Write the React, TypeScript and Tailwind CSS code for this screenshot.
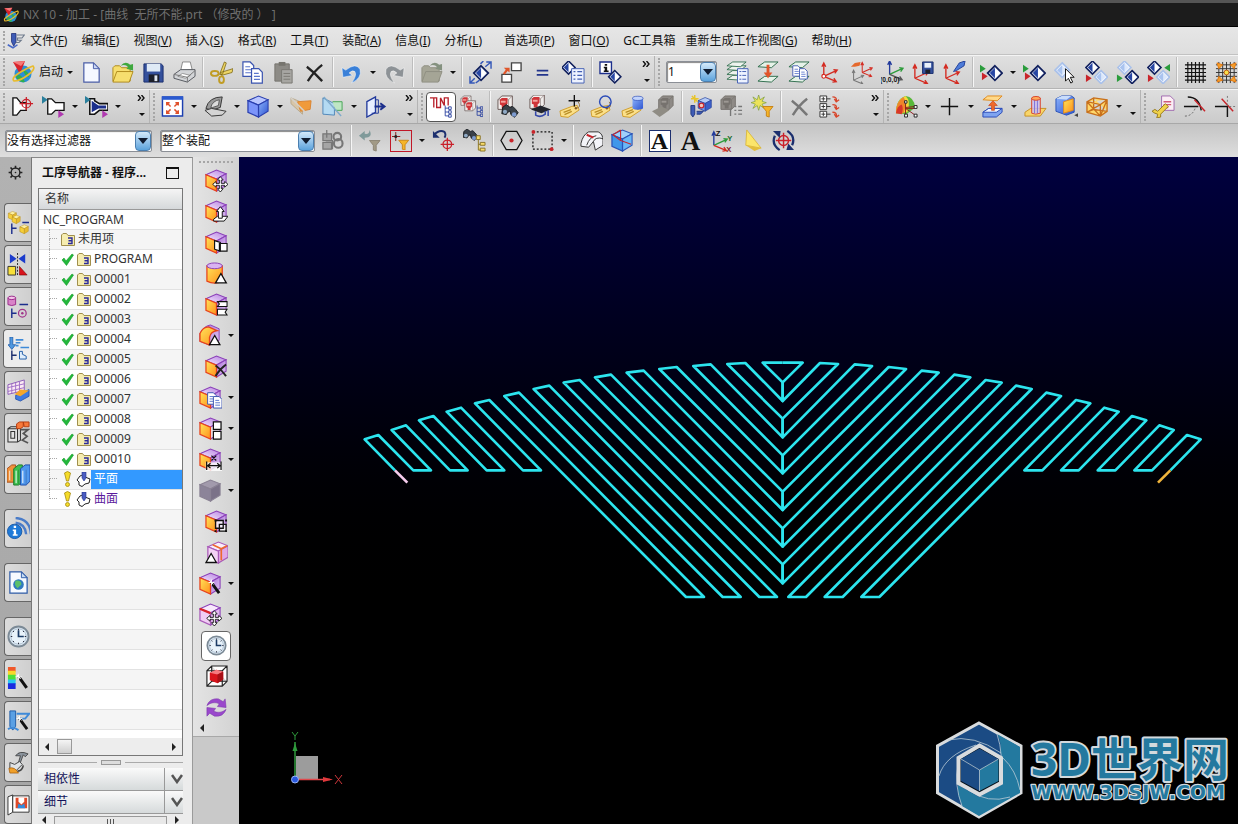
import { Fragment } from "react";
import type { ReactNode } from "react";

/* ---------- drawing primitives ---------- */

type Pos = { x?: number; y?: number; s?: number; children?: ReactNode };

const G = ({ x = 0, y = 0, s = 1, children }: Pos) => (
  <g transform={`translate(${x} ${y}) scale(${s})`}>{children}</g>
);

/* shared gradients, referenced by id from every icon */
const Paints = () => (
  <svg className="absolute size-0" aria-hidden="true">
    <defs>
      <linearGradient id="gold" x1="0" y1="0" x2="1" y2="1">
        <stop offset="0" stopColor="#ffe45a" />
        <stop offset="1" stopColor="#ff8f1a" />
      </linearGradient>
      <linearGradient id="lilac" x1="0" y1="1" x2="1" y2="0">
        <stop offset="0" stopColor="#f7ecff" />
        <stop offset="1" stopColor="#b57fe0" />
      </linearGradient>
      <linearGradient id="plum" x1="0" y1="0" x2="1" y2="1">
        <stop offset="0" stopColor="#a86cd8" />
        <stop offset="1" stopColor="#e3cdf3" />
      </linearGradient>
      <linearGradient id="sky" x1="0" y1="0" x2="1" y2="1">
        <stop offset="0" stopColor="#8db4fb" />
        <stop offset="1" stopColor="#2c52d0" />
      </linearGradient>
    </defs>
  </svg>
);

const Cube = ({
  x,
  y,
  s,
  top = "url(#lilac)",
  left = "url(#gold)",
  right = "url(#plum)",
  line = "#8a3fb8",
  edge = "#e8431c",
}: Pos & { top?: string; left?: string; right?: string; line?: string; edge?: string }) => (
  <G x={x} y={y} s={s}>
    <path d="M1 6L12 1L22 5L12 10.500Z" fill={top} stroke={line} strokeWidth="1.1" />
    <path d="M12 10.500L22 5V17L12 23Z" fill={right} stroke={line} strokeWidth="1.1" />
    <path d="M1 6L12 10.500V23L1 18Z" fill={left} stroke={edge} strokeWidth="1.3" />
  </G>
);

const Gem = ({ x, y, s = 1, pale }: Pos & { pale?: boolean }) => (
  <G x={x} y={y} s={s * 1.08}>
    <path d="M7 0L14 7L7 14L0 7Z" fill="#f4f8ff" stroke={pale ? "#a9c1ea" : "#101f5c"} strokeWidth="1.700" />
    <path d="M7 2.500L11.500 7L7 11.500L2.500 7Z" fill={pale ? "#dbe7fb" : "#fff"} />
    <path d="M7 2V12L2 7Z" fill={pale ? "#a9c3ef" : "#2746a4"} />
  </G>
);

const Tri = ({ x, y, s, c, left }: Pos & { c: string; left?: boolean }) => (
  <G x={x} y={y} s={s}>
    <path d={left ? "M6 0V8L0 4Z" : "M0 0V8L6 4Z"} fill={c} />
  </G>
);

const Axes = ({ x, y, s, c = "#d42a20", up = c, rt = c }: Pos & { c?: string; up?: string; rt?: string }) => (
  <G x={x} y={y} s={s}>
    <g fill="none" strokeWidth="1.4">
      <path d="M5 16V3M3 6L5 2L7 6" stroke={up} />
      <path d="M5 16L18 10M15 9L19 9.5L16.500 13" stroke={rt} />
      <path d="M5 16L17 21M14 22L18 21.500L15.500 18" stroke={c} />
    </g>
  </G>
);

const Bino = ({ x, y, s }: Pos) => (
  <G x={x} y={y} s={s}>
    <path d="M1 3L5 0L9 3L12 2L15 5L18 9L14 14L10 11L9 7L6 9L5 11L0 10Z" fill="#3a4148" stroke="#14181c" />
    <circle cx="3.500" cy="8" r="2.300" fill="#8fa9c4" />
    <circle cx="13.500" cy="11" r="2.500" fill="#7d9bd0" />
  </G>
);

const Part = ({ x, y, s, gray }: Pos & { gray?: boolean }) => (
  <G x={x} y={y} s={s}>
    <path d="M0 4L4 0H15V10L11 14H0Z" fill={gray ? "#8e8a86" : "#f1eeec"} stroke={gray ? "#77736f" : "#6b5a58"} />
    <path d="M0 4H11V14M11 4L15 0" fill="none" stroke={gray ? "#77736f" : "#8a7a78"} strokeWidth=".7" />
    <path d="M2 4L4 2H10V8L8 10V13H4V10L2 9Z" fill={gray ? "#76726e" : "#cf3438"} />
    <path d="M3 5H8V7H3Z" fill={gray ? "#9d9894" : "#f4a5a0"} />
  </G>
);

const Tree = ({ x, y, s, c = "#223a9c" }: Pos & { c?: string }) => (
  <G x={x} y={y} s={s}>
    <path d="M1 0V12H5M1 3H5M1 7.500H5M5 1.500H8V4.500H5ZM5 6H8V9H5ZM5 10.500H8V13.500H5Z" fill="none" stroke={c} />
  </G>
);

const Tag = ({ x, y, s }: Pos) => (
  <G x={x} y={y} s={s}>
    <path d="M0 7L13 2L19 1L21 6L9 14L1 13Z" fill="#fbe08a" stroke="#cf9a24" />
    <path d="M4 8.500L12 5.500M5 11L13 7.500" stroke="#b98d26" strokeWidth="1.300" />
    <circle cx="17.500" cy="4" r="1.300" fill="#8a5a1a" />
    <path d="M18 4Q24 3 20 -3" fill="none" stroke="#8a6a3a" strokeWidth=".9" />
  </G>
);

const Funnel = ({ x, y, s, c = "#f5b52a", e = "#c47c0c" }: Pos & { c?: string; e?: string }) => (
  <G x={x} y={y} s={s}>
    <path d="M0 0H11L7 5V11L4 10V5Z" fill={c} stroke={e} strokeWidth=".9" />
  </G>
);

const Target = ({ x, y, s }: Pos) => (
  <G x={x} y={y} s={s}>
    <g fill="none" stroke="#c9202a" strokeWidth="1.300">
      <circle cx="7" cy="7" r="4.500" />
      <path d="M7 0V14M0 7H14" />
    </g>
  </G>
);

const Page = ({ x, y, s }: Pos) => (
  <G x={x} y={y} s={s}>
    <path d="M0 0H6L9 3V12H0Z" fill="#fff" stroke="#3b54b0" />
    <path d="M2 4H6M2 6.500H7M2 9H7" stroke="#5b76cc" />
  </G>
);

const Layers = () => (
  <>
    {[15, 10, 5, 1].map((v) => (
      <path key={v} d={`M1 ${v + 4}L7 ${v}H21L15 ${v + 5}Z`} fill="#eef3ee" stroke="#2f6e4d" strokeWidth=".9" />
    ))}
  </>
);

const Wedge = ({ x, y, s }: Pos) => (
  <G x={x} y={y} s={s}>
    <path d="M4 0L8 7H0Z" fill="#fff" stroke="#111" strokeWidth="1" />
  </G>
);

const Wand = ({ x, y, s }: Pos) => (
  <G x={x} y={y} s={s}>
    <path d="M3 3L11 14" stroke="#111" strokeWidth="3" />
    <path d="M3 0V6M0 3H6M1 1L5 5" stroke="#fff" strokeWidth="1" />
  </G>
);

const Move = ({ x, y, s }: Pos) => (
  <G x={x} y={y} s={s}>
    <path
      d="M8 0L11 3.500H9V7H12.500V5L16 8L12.500 11V9H9V12.500H11L8 16L5 12.500H7V9H3.500V11L0 8L3.500 5V7H7V3.500H5Z"
      fill="#fff"
      stroke="#111"
      strokeWidth=".9"
    />
  </G>
);

const Clock = () => (
  <>
    <circle cx="12" cy="12" r="10.500" fill="#dbe8f4" stroke="#7c8a96" strokeWidth="2" />
    <circle cx="12" cy="12" r="8" fill="#e9f3fb" stroke="#8ca2b6" strokeWidth=".6" />
    <path d="M12 5.500V12H17.500" fill="none" stroke="#1c3c66" strokeWidth="1.800" />
    <path d="M12 4V5.500M12 18.500V20M4 12H5.500M18.500 12H20M6.300 6.300L7.300 7.300M17.700 6.300L16.700 7.300M6.300 17.700L7.300 16.700M17.700 17.700L16.700 16.700" stroke="#223" />
  </>
);

const Logo = () => (
  <>
    <circle cx="12" cy="14" r="8.500" fill="#2b8fd6" />
    <path d="M5 17Q9 11 14 22Q8 23 5 17ZM12 10Q18 11 18 17Q14 17 12 10Z" fill="#2fae4e" />
    <path d="M2 2L14 1L9 14Z" fill="#d8242c" />
    <path d="M2 2L14 1L10 6Z" fill="#f47a7a" />
    <path d="M3 21Q0 18 8 13T22 6Q25 9 17 15T3 21Z" fill="none" stroke="#e8bc2e" strokeWidth="1.700" />
  </>
);

const Folder = ({ c = "#f6de6e", e = "#b08a1c", arrow = "#3fa83f" }) => (
  <>
    <path d="M2 21V7L4 5H9L11 7H20V21Z" fill={c} stroke={e} />
    <path d="M2 22L6 11H23L19 22Z" fill={c} stroke={e} />
    <path d="M10 5Q15 -1 20 4L23 3V10L16 8L18 6.500Q15 3 10 5Z" fill={arrow} />
  </>
);

const Undo = ({ c = "#3a80d8", flip = false }) => (
  <g transform={flip ? "translate(24 0) scale(-1 1)" : undefined}>
    <path d="M2 7L3 17L13 15L9.500 12.500Q13 9 15.500 11Q18 15 12 23Q23 18 21 9Q17 1 6 9.500Z" fill={c} stroke="#fff" strokeWidth=".5" />
  </g>
);

const Letter = ({ x, y, size, c = "#111", children }: { x: number; y: number; size: number; c?: string; children: string }) => (
  <text x={x} y={y} fontSize={size} fill={c} fontWeight="bold" className="font-['Liberation_Sans',sans-serif]">
    {children}
  </text>
);

const ToolBit = () => (
  <>
    <path d="M6 2H12V13L9 19L6 13Z" fill="#3e5bb5" stroke="#1c2c77" />
    <path d="M13 4H23L20 8H14V11H19L16 14H12" fill="none" stroke="#6f7b8c" strokeWidth="1.500" />
    <path d="M1 17L8 21L14 17" fill="none" stroke="#4667c7" strokeWidth="2" />
  </>
);

/* ---------- icon library ---------- */

const icons: Record<string, ReactNode> = {
  logo: <Logo />,
  bit: <ToolBit />,
  newFile: (
    <>
      <path d="M4 2H14L20 8V22H4Z" fill="#f5f8ff" stroke="#4c5fa8" strokeWidth="1.300" />
      <path d="M14 2V8H20Z" fill="#c9d6f4" stroke="#4c5fa8" />
    </>
  ),
  open: <Folder />,
  openGray: <Folder c="#a5a596" e="#8f8f82" arrow="#84917f" />,
  save: (
    <>
      <path d="M2 3H20L22 5V22H2Z" fill="#34509c" stroke="#1b2f6e" />
      <path d="M5 3H19V11H5Z" fill="#dfeaf6" />
      <path d="M7 14H18V22H7Z" fill="#1c1f2a" />
      <path d="M13 15H16V21H13Z" fill="#dfe6ef" />
    </>
  ),
  print: (
    <>
      <path d="M8 10L10 1H18L20 9Z" fill="#fff" stroke="#888" />
      <path d="M1 14L8 9H23V16L15 22L1 18Z" fill="#d3d5d8" stroke="#55585e" />
      <path d="M5 16L10 13L18 15L13 18Z" fill="#fff" stroke="#777" strokeWidth=".7" />
      <path d="M1 14L15 17V22M15 17L23 10" fill="none" stroke="#777" />
    </>
  ),
  cut: (
    <>
      <path d="M10 14L15 1L17 2L13 14ZM11 12L24 8L23 12L12 15Z" fill="#ecd567" stroke="#7b6510" strokeWidth=".8" />
      <ellipse cx="5" cy="13" rx="4" ry="2.500" fill="none" stroke="#c09c24" strokeWidth="2" />
      <ellipse cx="12" cy="19.500" rx="2.500" ry="3.500" fill="none" stroke="#c09c24" strokeWidth="2" />
    </>
  ),
  copy: (
    <>
      <Page x={2} y={1} s={1.250} />
      <Page x={11} y={8} s={1.250} />
    </>
  ),
  paste: (
    <>
      <path d="M3 3H18V21H3Z" fill="#8d8b86" stroke="#75736e" />
      <path d="M7 1H14V5H7Z" fill="#77756f" />
      <path d="M10 9H21V23H10Z" fill="#a7a6a2" stroke="#7a7873" />
      <path d="M12 13H19M12 16H19M12 19H19" stroke="#7a7873" />
    </>
  ),
  del: <path d="M4 6Q12 12 20 21M20 4Q12 10 5 21" fill="none" stroke="#222" strokeWidth="2.400" />,
  delGray: <path d="M4 6Q12 12 20 21M20 4Q12 10 5 21" fill="none" stroke="#777" strokeWidth="2.600" />,
  undo: <Undo />,
  redo: <Undo c="#8d9296" flip />,
  snap: (
    <>
      <Gem x={5} y={5} />
      <path d="M1 16V23H6M1 23L6 18M23 8V1H18M23 1L17 6M7 23L11 20M12 3L15 0" fill="none" stroke="#3558b8" strokeWidth="1.500" />
    </>
  ),
  boxes: (
    <>
      <path d="M12 2H22V10H12ZM2 14H12V22H2Z" fill="#fff" stroke="#444" strokeWidth="1.400" />
      <path d="M3 13L6 9L4 7H10V12L8 10.500L5 14Z" fill="#e0562a" />
    </>
  ),
  equal: <path d="M6 10H18M6 14.500H18" stroke="#23358c" strokeWidth="1.800" />,
  gemList: (
    <>
      <Gem x={0} y={0} s={0.900} />
      <path d="M10 8H23V23H10Z" fill="#eef3ff" stroke="#4460b4" />
      <path d="M12 11H14M12 15H14M12 19H14M16 11H21M16 15H21M16 19H21" stroke="#4460b4" strokeWidth="1.300" />
    </>
  ),
  info: (
    <>
      <path d="M1 1H13V13H1Z" fill="#fff" stroke="#1c2f8c" strokeWidth="1.400" />
      <path d="M6 3H8.500V5H6ZM5 6H8.500V10H10V11.500H5V10H6V7.500H5Z" fill="#111" />
      <Gem x={10} y={10} s={0.850} />
    </>
  ),
  layerList: (
    <>
      <Layers />
      <path d="M12 8H23V23H12Z" fill="#eef3ff" stroke="#4460b4" />
      <path d="M14 11H16M14 15H16M14 19H16M17 11H21M17 15H21M17 19H21" stroke="#4460b4" />
    </>
  ),
  layerMove: (
    <>
      <path d="M1 6L8 1H22L15 7ZM1 21L8 16H22L15 22Z" fill="#e6f2e8" stroke="#2f6e4d" />
      <path d="M10 4H13V12H16L11.500 18L7 12H10Z" fill="#e1552a" />
    </>
  ),
  layerCopy: (
    <>
      <path d="M1 6L8 1H22L15 7ZM1 21L8 16H22L15 22Z" fill="#e6f2e8" stroke="#2f6e4d" />
      <Page x={5} y={5} s={0.900} />
      <Page x={12} y={8} s={0.900} />
    </>
  ),
  axis: (
    <>
      <Axes x={0} y={0} />
      <circle cx="5" cy="16" r="2" fill="#fff" stroke="#d42a20" strokeWidth="1.200" />
    </>
  ),
  axisTurn: (
    <>
      <Axes x={9} y={0} s={0.750} />
      <Axes x={0} y={8} s={0.750} c="#777" />
      <path d="M1 6L5 2L11 1L10 5L5 6Z" fill="#e5682c" />
    </>
  ),
  axisZero: (
    <>
      <Axes x={4} y={-2} up="#223a9c" rt="#2e9c3c" c="#555" />
      <Letter x={-1} y={22} size={7}>(0,0,0)</Letter>
    </>
  ),
  axisSave: (
    <>
      <Axes x={-2} y={2} />
      <path d="M11 1H22V13H11Z" fill="#34509c" stroke="#1b2f6e" />
      <path d="M13 2H20V7H13Z" fill="#e8f0fa" />
      <path d="M14 9H19V13H14Z" fill="#1c1f2a" />
    </>
  ),
  axisPen: (
    <>
      <Axes x={-2} y={2} />
      <path d="M11 11L17 2L23 0L22 5L14 10Z" fill="#4e7cd8" stroke="#23409a" />
    </>
  ),
  gemPlay: (
    <>
      <Tri x={0} y={4} c="#2a9c3c" />
      <Tri x={2} y={12} c="#c9242a" />
      <Gem x={8} y={5} />
    </>
  ),
  gemPick: (
    <>
      <Gem x={1} y={2} pale />
      <path d="M12 8V21L15 18L17.500 23L19.500 22L17 17H21Z" fill="#fff" stroke="#111" />
    </>
  ),
  gemA: (
    <>
      <Gem x={1} y={0} s={0.900} />
      <Gem x={10} y={10} s={0.900} pale />
      <Tri x={1} y={14} c="#c9242a" />
    </>
  ),
  gemB: (
    <>
      <Gem x={2} y={0} s={0.900} pale />
      <Gem x={10} y={10} s={0.900} />
      <Tri x={1} y={14} c="#2a9c3c" />
    </>
  ),
  gemC: (
    <>
      <Gem x={1} y={0} s={0.900} />
      <Gem x={10} y={10} s={0.900} pale />
      <Tri x={1} y={14} c="#c9242a" />
      <Tri x={18} y={3} c="#2a9c3c" left />
    </>
  ),
  grid: <path d="M1 4H23M1 8H23M1 12H23M1 16H23M1 20H23M4 1V23M8 1V23M12 1V23M16 1V23M20 1V23" stroke="#111" strokeWidth="1.200" />,
  gridSnap: (
    <>
      <path d="M1 4H23M1 8H23M1 12H23M1 16H23M1 20H23M4 1V23M8 1V23M12 1V23M16 1V23M20 1V23" stroke="#333" />
      <path d="M2 2L8 4L4 8ZM22 2L16 4L20 8ZM2 22L8 20L4 16ZM22 22L16 20L20 16Z" fill="#f5a02a" stroke="#e57a14" strokeWidth="1" />
      <circle cx="12" cy="12" r="2.500" fill="#f6e04c" stroke="#c05a10" />
    </>
  ),
  holder: (
    <>
      <path d="M2 3H6L10 8H16V16H10L6 21H2Z" fill="#fff" stroke="#111" strokeWidth="1.400" />
      <Target x={9} y={2} />
    </>
  ),
  holderA: (
    <>
      <path d="M6 4H10L14 8H23V16H14L10 20H6Z" fill="#fff" stroke="#111" strokeWidth="1.400" />
      <Tri x={0} y={1} c="#2a7f9c" />
      <Tri x={17} y={16} c="#b03ab0" />
    </>
  ),
  holderB: (
    <>
      <path d="M5 4H10V6L15 9H24V16H15L10 20H5Z" fill="#fff" stroke="#111" strokeWidth="1.600" />
      <path d="M7 6L14 11H22V14H14L7 18Z" fill="#1c2f8c" />
      <Tri x={0} y={1} c="#2a7f9c" />
      <Tri x={18} y={16} c="#b03ab0" />
    </>
  ),
  fit: (
    <>
      <path d="M1.500 2H22.500V22H1.500Z" fill="#fff" stroke="#1c3fb0" strokeWidth="1.500" />
      <path d="M1 1.500H23V5H1Z" fill="#2a5ad0" />
      <path d="M10 12L6 8M6 11V8H9M14 12L18 8M15 8H18V11M10 15L6 19M6 16V19H9M14 15L18 19M15 19H18V16" fill="none" stroke="#e0502a" strokeWidth="1.500" />
    </>
  ),
  shade: (
    <>
      <path d="M2 14Q5 2 19 2L17 13L8 16Z" fill="#9a9a9a" stroke="#333" />
      <path d="M7 13Q9 6 16 5L15 11L9 13Z" fill="#dcdcdc" stroke="#444" strokeWidth=".8" />
      <path d="M1 16L8 14L23 17L19 21L8 22Z" fill="#d4d4d4" stroke="#333" />
    </>
  ),
  blueCube: <Cube top="#b9c6ff" left="#7b94fa" right="url(#sky)" line="#2a3fae" edge="#2a3fae" />,
  clipA: (
    <>
      <path d="M1 3L13 8V20L1 9Z" fill="#d8c6a8" stroke="#b8a88c" />
      <path d="M8 7L22 6L21 15L11 17Z" fill="#f09a3a" stroke="#d98432" />
      <path d="M1 3L20 22" stroke="#d4d0ca" strokeWidth="1.500" />
    </>
  ),
  clipB: (
    <>
      <path d="M2 3L14 9V21L2 20Z" fill="#b4daf2" stroke="#4f86b8" />
      <path d="M12 7H22V16H15" fill="#bfe6c4" stroke="#47a456" />
      <path d="M3 2L21 22" stroke="#7fabcc" strokeWidth="1.500" />
    </>
  ),
  exit: (
    <>
      <path d="M3 7L12 2V18L3 23Z" fill="#e9efff" stroke="#223a9c" strokeWidth="1.400" />
      <path d="M12 5H15V19H8" fill="none" stroke="#223a9c" />
      <path d="M11 12H20M17 8.500L21.500 12L17 15.500" fill="none" stroke="#1c2f8c" strokeWidth="2" />
    </>
  ),
  pathTree: (
    <>
      <path d="M1 3H5V13M5 3H8V13H12V3L16 11V3H20V11" fill="none" stroke="#b8202a" strokeWidth="1.400" />
      <Tree x={16} y={11} s={0.900} />
    </>
  ),
  partTree: (
    <>
      <Part x={1} y={1} s={0.700} />
      <Part x={5} y={6} s={0.750} />
      <Tree x={17} y={11} s={0.850} />
    </>
  ),
  partFind: (
    <>
      <Part x={1} y={1} />
      <Bino x={5} y={10} s={0.950} />
    </>
  ),
  partCap: (
    <>
      <Part x={2} y={0} />
      <path d="M3 15L13 11L24 15L14 19Z" fill="#22252c" />
      <path d="M8 17V21Q13 24 18 20V17M21 16V22" fill="none" stroke="#3448a8" strokeWidth="1.600" />
    </>
  ),
  tagPlus: (
    <>
      <Tag x={1} y={10} s={0.950} />
      <path d="M16 0V12M10 6H22" stroke="#111" strokeWidth="1.400" />
    </>
  ),
  tagRing: (
    <>
      <Tag x={1} y={10} s={0.950} />
      <circle cx="16" cy="7" r="6" fill="none" stroke="#2a4bb8" strokeWidth="1.500" />
    </>
  ),
  tagCyl: (
    <>
      <Tag x={1} y={10} s={0.950} />
      <path d="M12 3V14Q17 17 23 14V3Z" fill="url(#sky)" />
      <ellipse cx="17.500" cy="3.500" rx="5.500" ry="2.200" fill="#c2d4fc" stroke="#2a4bb8" strokeWidth=".7" />
    </>
  ),
  partGray: (
    <>
      <Part x={7} y={1} gray />
      <path d="M0 17L10 12L18 16L8 23Z" fill="#8f8c84" />
    </>
  ),
  newOp: (
    <>
      <Cube x={9} y={2} s={0.650} left="#6f96f0" right="#3c5fc8" top="#b5ccf8" line="#25409a" edge="#25409a" />
      <circle cx="13" cy="11" r="2.500" fill="#f5c8ba" stroke="#c8242a" strokeWidth="1.300" />
      <path d="M6 0V8M2 4H10M3 1L9 7" stroke="#e8c42a" strokeWidth="1.500" />
      <path d="M2 11H6V20L4 23L2 20ZM8 17H15L12 20H8" fill="#3e5bb5" stroke="#24387f" />
    </>
  ),
  listGray: (
    <>
      <Part x={1} y={1} gray />
      <path d="M15 12H17M15 16H17M15 20H17M19 12H23M19 16H23M19 20H23M11 14V22" stroke="#777" strokeWidth="1.400" />
    </>
  ),
  starFunnel: (
    <>
      <path d="M8 0L9.500 5L14 2L11.500 6.500L16 8L11.500 9.500L14 14L9.500 11L8 16L6.500 11L2 14L4.500 9.500L0 8L4.500 6.500L2 2L6.500 5Z" fill="#ece35a" stroke="#7a9c3a" strokeWidth=".7" />
      <Funnel x={12} y={12} />
    </>
  ),
  rows: (
    <>
      <path d="M1 1H8V7H1ZM1 9H8V15H1ZM1 17H8V23H1Z" fill="#fff" stroke="#333" />
      <path d="M4.500 2V6M2.500 4H6.500M4.500 10V14M2.500 12H6.500M4.500 18V22M2.500 20H6.500M8 4H12M8 12H12M8 20H12" stroke="#333" />
      <path d="M14 2Q19 2 18 6M16 4L18 7L21 5M14 10Q19 10 18 14M16 12L18 15L21 13M14 18Q19 18 18 22M16 20L18 23L21 21" fill="none" stroke="#d8452a" strokeWidth="1.400" />
    </>
  ),
  analyse: (
    <>
      <path d="M1 19Q1 4 11 1Q20 2 21 13L12 20Z" fill="#58b83a" />
      <path d="M1 19Q1 5 11 1Q17 6 13 18Z" fill="#f5d83a" />
      <path d="M1 19Q1 6 9 2Q13 8 9 19Z" fill="#f0852a" />
      <path d="M1 19Q2 12 7 10Q9 14 7 20Z" fill="#d8362a" />
      <path d="M11 7V20M11 13L21 12M11 14L21 21M11 14H21" stroke="#8a1c1c" />
      <path d="M10 6H12.500V8.500H10ZM20 11H23V14H20ZM20 20H23V23H20ZM10 20H13V23H10Z" fill="#fff" stroke="#222" />
    </>
  ),
  plus: <path d="M12 3V21M3 12H21" stroke="#111" strokeWidth="1.500" />,
  extrude: (
    <>
      <path d="M2 5L7 1H22L17 6Z" fill="#ffd98a" stroke="#e08a1c" />
      <path d="M2 18L8 14H22V18L16 23H2Z" fill="#7fa4f0" stroke="#2a4bb8" />
      <path d="M2 18L8 14H22L16 18Z" fill="#eef4ff" stroke="#2a4bb8" />
      <path d="M11 16V11H8L12.500 6L17 11H14V16Z" fill="#f06a2a" stroke="#c8451c" strokeWidth=".7" />
    </>
  ),
  cylinder: (
    <>
      <path d="M1 18L7 14H23L17 22H1Z" fill="#f8d56a" stroke="#c79022" />
      <path d="M8 3V19Q12 21 17 19V3" fill="#cdbff0" fillOpacity=".8" stroke="#d8452a" />
      <path d="M11 5V19M14 5V19" stroke="#7b6fd8" />
      <ellipse cx="12.500" cy="3.500" rx="4.500" ry="2" fill="#ffa95a" stroke="#d8452a" />
    </>
  ),
  solid: (
    <>
      <path d="M1 4L7 1H17L20 3V18L12 21L1 17Z" fill="url(#sky)" stroke="#2a54b8" />
      <path d="M1 4L7 1H17L12 5Z" fill="#c9dcfb" />
      <path d="M9 7L19 4V16L9 19Z" fill="url(#gold)" stroke="#e08a1c" />
      <path d="M20 21L24 19V23Z" fill="#444" />
    </>
  ),
  lattice: (
    <path
      d="M1 7L8 3L22 5V17L15 22L1 18ZM1 7L15 10L22 5M15 10V22M1 7L15 22M22 5L15 22M1 18L15 10M8 3V15L22 17M8 15L1 18"
      fill="#ffd76a"
      stroke="#c8701c"
      strokeWidth="1.400"
    />
  ),
  wrench: (
    <>
      <path d="M10 1H19L23 5V16H10Z" fill="#fbeef4" stroke="#a06ab0" />
      <path d="M12 7H20M12 10H20M12 13H17" stroke="#d05a7a" strokeWidth="1.400" />
      <path d="M0 17L3 15L6 17L14 9L17 12L9 20L9 23L5 24L6 20L3 19Z" fill="#f0d24a" stroke="#96791c" />
    </>
  ),
  trimA: (
    <>
      <path d="M1 12H16M5 2Q17 2 19 16" fill="none" stroke="#111" strokeWidth="1.500" />
      <path d="M12 5L23 17" stroke="#c8242a" strokeWidth="1.500" />
      <path d="M2 22Q10 22 13 13" fill="none" stroke="#666" strokeDasharray="2 2" />
    </>
  ),
  trimB: (
    <>
      <path d="M1 12H14V23" fill="none" stroke="#111" strokeWidth="1.500" />
      <path d="M8 4L20 17" stroke="#c8242a" strokeWidth="1.500" />
      <path d="M14 1V11M16 12H24" stroke="#777" strokeDasharray="2 2" />
    </>
  ),
  linkGray: (
    <>
      <path d="M2 5H11V12H2ZM2 14H11V21H2ZM6 1V9M4 12H12V21" fill="#a5a5a5" stroke="#777" strokeWidth="1.300" />
      <circle cx="17" cy="8" r="4" fill="none" stroke="#777" strokeWidth="2.200" />
      <circle cx="18" cy="15" r="4.500" fill="none" stroke="#777" strokeWidth="2.200" />
    </>
  ),
  resetGray: (
    <>
      <path d="M1 7L7 2V5Q12 6 12 1Q16 9 7 9V12Z" fill="#7f9a9a" />
      <Funnel x={12} y={12} c="#a29a86" e="#888070" />
    </>
  ),
  filterOn: (
    <>
      <path d="M5 0V12M-1 6H11" stroke="#8a1c1c" strokeWidth="1.300" />
      <circle cx="5" cy="6" r="2" fill="#222" />
      <Funnel x={9} y={11} s={1.200} />
    </>
  ),
  backTarget: (
    <>
      <path d="M2 6Q8 0 13 3Q15 6 13 9" fill="none" stroke="#1c2f6e" strokeWidth="2" />
      <path d="M1 2V9H8Z" fill="#1c2f6e" />
      <Target x={9} y={9} />
    </>
  ),
  findTree: (
    <>
      <Bino x={0} y={0} s={0.850} />
      <path d="M14 7H18V11H14ZM18 14H23V17H18ZM18 20H23V23H18ZM16 11V22H18M16 16H18" fill="#f8dc6a" stroke="#8a742a" />
    </>
  ),
  hexPoint: (
    <>
      <path d="M6.500 2.500H17.500L23 12L17.500 21.500H6.500L1 12Z" fill="none" stroke="#111" strokeWidth="1.300" />
      <circle cx="12" cy="12" r="2.200" fill="#c8242a" />
    </>
  ),
  dashBox: (
    <>
      <path d="M2 3H22V21H2Z" fill="none" stroke="#111" strokeWidth="1.300" strokeDasharray="2 2" />
      <circle cx="2.500" cy="3" r="2" fill="#c8242a" />
      <circle cx="21.500" cy="21" r="2" fill="#c8242a" />
    </>
  ),
  roll: (
    <>
      <path d="M1 15Q3 6 9 3H19Q24 5 24 12V17L16 22L14 13L9 19L1 18Z" fill="#f3f4f8" stroke="#333" />
      <path d="M14 13Q16 8 24 10M7 17Q10 8 17 7" fill="none" stroke="#333" />
      <path d="M7 6L14 9" stroke="#c8242a" strokeWidth="2" />
    </>
  ),
  blueBox: (
    <>
      <Cube top="#9fd0fa" left="#3f97ea" right="#6ab8f6" line="#2a54b8" edge="#2a54b8" />
      <path d="M10 1V12L21 16M10 12L2 6L10 1" fill="none" stroke="#c8242a" strokeWidth="1.100" />
    </>
  ),
  axisXYZ: (
    <>
      <Axes x={-1} y={1} up="#223a9c" rt="#2e9c3c" />
      <Letter x={6} y={7} size={8}>Z</Letter>
      <Letter x={18} y={12} size={8} c="#1c6a2c">Y</Letter>
      <Letter x={17} y={24} size={8} c="#8a1c1c">X</Letter>
    </>
  ),
  highlight: (
    <>
      <path d="M6 1L21 20L5 17Z" fill="#fbe56a" stroke="#d8b22a" strokeWidth=".8" />
      <path d="M5 17L21 20L14 23Z" fill="#e3bd3a" />
    </>
  ),
  orient: (
    <>
      <Target x={4} y={4} s={1.150} />
      <path d="M8 22Q-1 16 3 7M16 2Q25 8 21 17" fill="none" stroke="#1c2f6e" strokeWidth="2.400" />
      <path d="M1 2H9L8 9ZM23 22H15L17 15Z" fill="#1c2f6e" />
    </>
  ),
  moveFace: (
    <>
      <Cube />
      <Move x={8} y={8} />
    </>
  ),
  pull: (
    <>
      <Cube />
      <path d="M9 20L13 17H24L20 22H9Z" fill="#fff" stroke="#111" />
      <path d="M16 7L20 12H18V19H14V12H12Z" fill="#fff" stroke="#111" />
    </>
  ),
  offset: (
    <>
      <Cube />
      <path d="M10 10L16 12V21L10 19ZM15 13H23V21H15Z" fill="#fff" stroke="#111" strokeWidth="1.200" />
    </>
  ),
  replace: (
    <>
      <path d="M2 4V20Q10 24 18 20V4Z" fill="url(#gold)" stroke="#e8431c" strokeWidth="1.300" />
      <ellipse cx="10" cy="4" rx="8" ry="3" fill="#d9b3f2" stroke="#8a3fb8" />
      <Wedge x={11} y={12} s={1.400} />
    </>
  ),
  swap: (
    <>
      <Cube />
      <path d="M13 9H23V14H13L15 11.500ZM13 17H23L21 20L23 23H13Z" fill="#fff" stroke="#111" strokeWidth="1.100" />
    </>
  ),
  blend: (
    <>
      <path d="M1 10Q5 2 12 1L21 5V17L11 22L1 18Z" fill="url(#plum)" stroke="#8a3fb8" />
      <path d="M1 18V10Q4 3 10 3L19 7Q12 8 11 14V22Z" fill="url(#gold)" stroke="#e8431c" strokeWidth="1.400" />
      <Wedge x={11} y={12} s={1.350} />
    </>
  ),
  delFace: (
    <>
      <Cube />
      <path d="M11 11Q17 15 22 22M22 10Q15 15 11 22" stroke="#222" strokeWidth="2" />
    </>
  ),
  copyFace: (
    <>
      <Cube />
      <Page x={9} y={7} />
      <Page x={15} y={11} />
    </>
  ),
  pairFace: (
    <>
      <Cube right="#f2ecf7" />
      <path d="M15 5H23V13H15ZM15 15H23V23H15Z" fill="#fff" stroke="#111" strokeWidth="1.300" />
    </>
  ),
  dimFace: (
    <>
      <Cube />
      <path d="M7 15H24V24H7Z" fill="#fff" fillOpacity=".8" />
      <path d="M8 14V23M23 14V23M9 18.500H22M12 16L9 18.500L12 21M19 16L22 18.500L19 21M13 8L18 13M18 8L13 13" fill="none" stroke="#111" strokeWidth="1.300" />
    </>
  ),
  grayCube: <Cube top="#a29aac" left="#8c8499" right="#7b7288" line="#8a8294" edge="#8a8294" />,
  groupFace: (
    <>
      <Cube />
      <path d="M11 11H19V19H11ZM15 15H22V22H15Z" fill="#fff" fillOpacity=".8" stroke="#111" strokeWidth="1.400" />
      <path d="M10 10H12V12H10ZM21 10H23V12H21ZM10 21H12V23H10ZM21 21H23V23H21Z" fill="#111" />
    </>
  ),
  section: (
    <>
      <Cube x={2} left="#f3d2f4" right="#e0a9e6" top="#f8edfc" line="#a85ab8" edge="#a85ab8" />
      <path d="M8 4L17 8V20M17 8L23 5" fill="none" stroke="#ee6a2c" strokeWidth="1.700" />
      <Wedge x={1} y={13} s={1.350} />
    </>
  ),
  wandFace: (
    <>
      <Cube />
      <Wand x={10} y={8} />
    </>
  ),
  moveEdge: (
    <>
      <Cube left="#f1cdf4" right="#e2b6ee" top="#f8e9fc" edge="#a85ab8" />
      <path d="M1 6L12 10.500" stroke="#d8242a" strokeWidth="2.500" />
      <Move x={8} y={8} />
    </>
  ),
  clock: <Clock />,
  wireCube: (
    <>
      <path d="M2 6L7 1H23V17L18 22H2ZM2 6H18V22M18 6L23 1M7 1V17H23M7 17L2 22" fill="#fff" stroke="#222" strokeWidth="1.200" />
      <path d="M5 8L12 5L19 7V15L13 19L5 16Z" fill="#d8141c" />
      <path d="M5 8L12 5L19 7L13 10Z" fill="#f47a80" />
      <path d="M13 10L19 7V15L13 19Z" fill="#a80f16" />
    </>
  ),
  refresh: (
    <path
      d="M2 10Q5 2 14 3L19 6L21 3L22 12L13 11L15 8Q8 5 2 10ZM22 14Q19 22 10 21L5 18L2 21V12L11 13L9 16Q16 19 22 14Z"
      fill="#9a48cc"
      stroke="#7a34ac"
      strokeWidth=".6"
    />
  ),
  gear: (
    <>
      <circle cx="12" cy="12" r="7" fill="none" stroke="#222" strokeWidth="2.200" />
      <path d="M12 1V5M12 19V23M1 12H5M19 12H23M4 4L7 7M17 17L20 20M20 4L17 7M4 20L7 17" stroke="#222" strokeWidth="2.600" />
      <circle cx="12" cy="12" r="1.300" fill="#222" />
    </>
  ),
  tabAssembly: (
    <>
      <Cube x={1} y={0} s={0.400} left="#f5cf3a" right="#e8bc2e" top="#fdf0a0" line="#b88c18" edge="#b88c18" />
      <Cube x={5} y={4} s={0.400} left="#f5cf3a" right="#e8bc2e" top="#fdf0a0" line="#b88c18" edge="#b88c18" />
      <Cube x={13} y={14} s={0.420} left="#f5cf3a" right="#e8bc2e" top="#fdf0a0" line="#b88c18" edge="#b88c18" />
      <path d="M5 13V24M5 18H10M16 12H23" stroke="#1c2f8c" strokeWidth="1.500" />
    </>
  ),
  tabConstraint: (
    <>
      <path d="M3 1L10 6L3 11ZM19 1L12 6L19 11Z" fill="#1c3ccc" />
      <path d="M1 14H9V23H1Z" fill="#f8e03a" stroke="#333" />
      <path d="M13 14L21 23H13Z" fill="#d8141c" stroke="#700" strokeWidth=".6" />
      <path d="M11 0V24" stroke="#222" strokeDasharray="2 1.500" />
    </>
  ),
  tabPart: (
    <>
      <path d="M1 3V10Q5 12 9 10V3Z" fill="#d884c8" stroke="#9a2a8a" />
      <ellipse cx="5" cy="3" rx="4" ry="1.800" fill="#f4c4ea" stroke="#9a2a8a" />
      <path d="M5 14V24M5 19H10M13 10H22" stroke="#1c2f8c" strokeWidth="1.500" />
      <circle cx="16" cy="19" r="4" fill="none" stroke="#a0348a" strokeWidth="1.300" />
      <circle cx="16" cy="19" r="1.300" fill="#a0348a" />
    </>
  ),
  tabOperation: (
    <>
      <path d="M2 0H5V8H8L4 13L0 8H2Z" fill="#4f98e0" stroke="#1f5ca8" strokeWidth=".8" />
      <path d="M8 3H16M8 6H13M8 9H11M13 11H22" stroke="#3f8ad8" strokeWidth="1.600" />
      <path d="M4 14V24M4 19H9" stroke="#1c2f6e" strokeWidth="1.500" />
      <path d="M12 15H15V18L19 20V23H12Z" fill="#e0eefc" stroke="#1f5ca8" />
    </>
  ),
  tabMachine: (
    <>
      <path d="M1 6L18 1V12L1 16Z" fill="#fbeaf4" stroke="#8a5ab8" />
      <path d="M1 9L18 5M1 13L18 9M5 5V15M9 4V14M13 3V13" stroke="#a070c8" />
      <path d="M9 17L23 11V18L14 23L9 21Z" fill="#3f7ae0" stroke="#1f4ca8" strokeWidth=".8" />
      <path d="M8 16L14 11L23 12L14 18Z" fill="#f5a62a" />
    </>
  ),
  tabCenter: (
    <>
      <path d="M1 8L4 6H14V20L11 22H1ZM1 8H11V22M11 8L14 6M4 11H8V18H4Z" fill="#e4e4e4" stroke="#333" strokeWidth="1.100" />
      <path d="M10 3L13 1H17V6L14 8H10ZM17 1H23V6H18Z" fill="#f7793a" stroke="#b33c10" />
      <path d="M14 9H22L17 13L21 16L16 20L22 23" fill="none" stroke="#555" strokeWidth="1.800" />
    </>
  ),
  tabLibrary: (
    <>
      <path d="M0 6L5 2H9V20H0Z" fill="#f0923a" stroke="#a8501c" />
      <path d="M7 6L12 2H16V20L12 23H7Z" fill="#3cc04e" stroke="#1c7a2c" />
      <path d="M14 6L19 2H24V19L20 23H14Z" fill="#4f98ee" stroke="#1c4ca8" />
      <path d="M3 8V18M9.500 8V21M16.500 8V21" stroke="#fff" />
      <path d="M4 8V18M12 7V22M20 7V22" stroke="#0003" />
    </>
  ),
  tabInfo: (
    <>
      <path d="M9 6Q19 7 20 18M9 1Q24 2 25 18" fill="none" stroke="#4a7cc8" strokeWidth="2.500" />
      <circle cx="8" cy="15" r="7.500" fill="#1f7ad8" stroke="#1a5aa8" />
      <path d="M7 9H9.500V11.500H7ZM6 13H9.500V18H11V19.500H6V18H7V14.500H6Z" fill="#fff" />
    </>
  ),
  tabWeb: (
    <>
      <path d="M3 1H15L21 7V23H3Z" fill="#f6faff" stroke="#2f5ca8" strokeWidth="1.300" />
      <path d="M15 1V7H21Z" fill="#c6dcf4" stroke="#2f5ca8" />
      <circle cx="12" cy="14" r="5.500" fill="#2f7ac0" />
      <path d="M9 10Q15 9 15 14L11 18Q7 15 9 10Z" fill="#5cc06c" />
    </>
  ),
  tabColor: (
    <>
      <path d="M1 0H9V5H1Z" fill="#f0582a" />
      <path d="M1 4H9V9H1Z" fill="#f8d82a" />
      <path d="M1 8H9V14H1Z" fill="#4ee03a" />
      <path d="M1 13H9V18H1Z" fill="#2ac8f0" />
      <path d="M1 17H9V23H1Z" fill="#1a2ce0" />
      <Wand x={9} y={7} s={1.050} />
    </>
  ),
  tabPathWand: (
    <>
      <path d="M3 2H9V18L6 22L3 18Z" fill="#5aa0e4" stroke="#1f5ca8" />
      <path d="M10 5H23L19 10H12M1 21Q6 18 12 22" fill="none" stroke="#3f8ad8" strokeWidth="2" />
      <Wand x={10} y={7} />
    </>
  ),
  tabTools: (
    <>
      <path d="M9 5Q13 -1 22 3L19 6L17 4L14 12H12L14 5Z" fill="#8a939c" stroke="#333" strokeWidth=".8" />
      <path d="M3 12L8 14L13 11L16 14L8 22L3 18Z" fill="#dfe3e6" stroke="#444" />
      <path d="M2 18Q8 16 12 23H3Z" fill="#f0a02a" stroke="#a86010" strokeWidth=".8" />
      <path d="M11 21Q16 21 17 15" fill="none" stroke="#444" strokeWidth="1.600" />
    </>
  ),
  tabRoles: (
    <>
      <path d="M1 4L6 2V20L1 23Z" fill="#fff" stroke="#333" />
      <path d="M6 3H23V20H6Z" fill="#fff" stroke="#333" />
      <path d="M9 5H21V16H9Z" fill="#e04a2a" />
      <path d="M12 5H18V9L15 12L12 9Z" fill="#fff" />
      <path d="M11 16L12 11L15 13L18 11L19 16Z" fill="#2f8ce0" />
    </>
  ),
};

const Icon = ({ name, className = "size-6" }: { name: string; className?: string }) => (
  <svg viewBox="0 0 24 24" className={className} fill="none" aria-hidden="true">
    {icons[name]}
  </svg>
);

/* ---------- toolbar pieces ---------- */

const Caret = () => (
  <svg viewBox="0 0 6 3" className="h-[3px] w-[6px]" aria-hidden="true">
    <path d="M0 0H6L3 3Z" fill="#111" />
  </svg>
);

const Grip = () => (
  <span className="flex w-[7px] shrink-0 items-center justify-center">
    <span className="h-7 border-l-2 border-dotted border-[#a6a6a6]" />
  </span>
);

const Divider = () => (
  <span className="flex w-[6px] shrink-0 justify-center py-px">
    <span className="w-px bg-[#bdbdbd]" />
    <span className="w-px bg-[#f6f6f6]" />
  </span>
);

const Overflow = ({ chevrons = true, className }: { chevrons?: boolean; className: string }) => (
  <button type="button" aria-label="更多" className={`flex shrink-0 flex-col items-end gap-3 pr-1 ${className}`}>
    {chevrons && (
      <svg viewBox="0 0 8 6" className="h-[6px] w-2" aria-hidden="true">
        <path d="M1 0L3.500 3L1 6M4.500 0L7 3L4.500 6" fill="none" stroke="#111" strokeWidth="1.400" />
      </svg>
    )}
    <Caret />
  </button>
);

/* "|" is a divider, a trailing "+" adds a menu arrow, a leading "*" marks a pressed button, "!" an active filter */
const Tools = ({ items }: { items: string }) => (
  <>
    {items.split(" ").map((item, i) => {
      if (item === "|") return <Divider key={i} />;
      const name = item.replace(/[*+!]/g, "");
      const look = item.startsWith("*")
        ? "rounded-sm border border-[#555] bg-white"
        : item.startsWith("!")
          ? "border border-[#c01828]"
          : "";
      return (
        <Fragment key={i}>
          <button type="button" aria-label={name} className="flex w-[31px] shrink-0 items-center justify-center">
            <span
              className={`flex items-center justify-center ${look} ${item.startsWith("*") ? "h-[30px] w-[30px]" : item.startsWith("!") ? "size-[22px]" : "size-6"}`}
            >
              <Icon name={name} className={item.startsWith("!") ? "size-[18px]" : "size-[23px]"} />
            </span>
          </button>
          {item.endsWith("+") && (
            <button type="button" aria-label={`${name} 菜单`} className="flex w-3 shrink-0 items-center justify-center">
              <Caret />
            </button>
          )}
        </Fragment>
      );
    })}
  </>
);

const Combo = ({ label, value, className }: { label: string; value: string; className: string }) => (
  <label aria-label={label} className={`relative flex h-[22px] shrink-0 self-center ${className}`}>
    <select
      aria-label={label}
      defaultValue={value}
      className="w-full appearance-none rounded-xs border border-[#8b8f96] bg-white py-0 pl-px text-xs leading-5 text-[#111] shadow-[inset_1px_1px_1px_#888]"
    >
      <option>{value}</option>
    </select>
    <span className="pointer-events-none absolute inset-y-px right-px flex w-4 items-center justify-center rounded-sm border border-[#4b7fb0] bg-gradient-to-b from-[#d3e9fa] to-[#5ba3dc]">
      <svg viewBox="0 0 10 6" className="h-[6px] w-[10px]" aria-hidden="true">
        <path d="M0 0H10L5 6Z" fill="#101c30" />
      </svg>
    </span>
  </label>
);

const segment = "flex shrink-0 border-r border-[#b4b4b4]";

/* ---------- content ---------- */

const menus: [string, string?][] = [
  ["文件", "F"],
  ["编辑", "E"],
  ["视图", "V"],
  ["插入", "S"],
  ["格式", "R"],
  ["工具", "T"],
  ["装配", "A"],
  ["信息", "I"],
  ["分析", "L"],
  ["首选项", "P"],
  ["窗口", "O"],
  ["GC工具箱"],
  ["重新生成工作视图", "G"],
  ["帮助", "H"],
];

const programs = ["PROGRAM", "O0001", "O0002", "O0003", "O0004", "O0005", "O0006", "O0007", "O0008", "O0009", "O0010"];

const tabGroups = [
  ["tabAssembly", "tabConstraint", "tabPart", "tabOperation", "tabMachine", "tabCenter", "tabLibrary"],
  ["tabInfo"],
  ["tabWeb"],
  ["clock", "tabColor", "tabPathWand", "tabTools", "tabRoles"],
];

const sideTools =
  "moveFace pull offset replace swap blend+ delFace copyFace+ pairFace+ dimFace+ grayCube+ groupFace section wandFace+ moveEdge+ *clock wireCube refresh";

/* ---------- navigator tree ---------- */

const Check = () => (
  <svg viewBox="0 0 13 13" className="size-[13px]" aria-hidden="true">
    <path d="M1 7L3 5L5 8L11 1L12.500 2L5.500 12.500Z" fill="#22b83a" stroke="#149a2c" strokeWidth=".6" />
  </svg>
);

const Alert = () => (
  <svg viewBox="0 0 13 16" className="h-4 w-[13px]" aria-hidden="true">
    <path d="M3.500 2Q6.500 -1 9.500 2L7.500 10H5.500Z" fill="#f5dc2a" stroke="#a58a10" strokeWidth=".8" />
    <circle cx="6.500" cy="13.500" r="2" fill="#f5dc2a" stroke="#a58a10" strokeWidth=".8" />
  </svg>
);

const FolderMark = () => (
  <svg viewBox="0 0 14 13" className="h-[13px] w-[14px]" aria-hidden="true">
    <path d="M.5 12.500V2L2 .5H5.500L7 2.500H13.500V12.500Z" fill="#f6edb0" stroke="#a08f4c" />
    <path d="M7 5H11V10.500H7M7.500 7.700H11" fill="none" stroke="#2a2a9c" strokeWidth="1.400" />
  </svg>
);

const OpMark = () => (
  <svg viewBox="0 0 15 15" className="size-[15px]" aria-hidden="true">
    <path d="M1 8L4 4Q8 2 9 5L14 7L13 11L9 12L6 14.500L3 13V10Z" fill="#fff" stroke="#222" />
    <path d="M6 0H10V6L8 9L6 6Z" fill="#4a5cc0" stroke="#24348c" strokeWidth=".6" />
  </svg>
);

const Branch = ({ last = false }) => (
  <span className="flex h-5 w-2 shrink-0 flex-col">
    <span className="h-[10px] border-b border-l border-dotted border-[#a9a9a9]" />
    <span className={`h-[10px] border-dotted border-[#a9a9a9] ${last ? "" : "border-l"}`} />
  </span>
);

const rowBase = "border-b border-[#e2e2e2] odd:bg-white even:bg-[#f5f5f5]";

const Row = ({ mark, kind, label, last, tone = "" }: { mark?: ReactNode; kind: ReactNode; label: string; last?: boolean; tone?: string }) => (
  <tr className={rowBase}>
    <td className="h-5 p-0">
      <div className="flex h-[19px] items-center pl-[10px]">
        <Branch last={last} />
        {mark && <span className="ml-1 flex w-[13px] justify-center">{mark}</span>}
        <span className={`flex w-[15px] justify-center ${mark ? "ml-0.5" : "ml-[3px]"}`}>{kind}</span>
        <span className={`flex h-full flex-1 items-center pl-[3px] ${tone}`}>{label}</span>
      </div>
    </td>
  </tr>
);

const Navigator = () => (
  <section aria-label="工序导航器" className="flex w-[162px] shrink-0 flex-col border-x border-t border-l-[#777] border-r-[#9a9a9a] border-t-[#888] bg-[#ececec] pr-[9px] pl-[6px]">
    <header className="flex h-[30px] shrink-0 items-center justify-between pr-1 pl-1">
      <h2 className="truncate text-xs font-bold text-[#111]">工序导航器 - 程序...</h2>
      <button type="button" aria-label="最大化" className="h-[12px] w-[13px] border border-t-2 border-[#111]" />
    </header>
    <div className="flex min-h-0 flex-1 flex-col border border-[#777] bg-white">
      <div className="min-h-0 flex-1 overflow-hidden">
        <table className="w-full border-collapse text-xs text-[#333]">
          <thead>
            <tr>
              <th className="h-[20px] border-b border-[#999] bg-gradient-to-b from-[#f5f5f5] to-[#d5d8da] p-0 pl-[6px] text-left font-normal">
                名称
              </th>
            </tr>
          </thead>
          <tbody>
            <tr className={rowBase}>
              <td className="h-5 p-0 pl-1 leading-[19px]">NC_PROGRAM</td>
            </tr>
            <Row kind={<FolderMark />} label="未用项" />
            {programs.map((p) => (
              <Row key={p} mark={<Check />} kind={<FolderMark />} label={p} />
            ))}
            <Row mark={<Alert />} kind={<OpMark />} label="平面" tone="bg-[#3399ff] text-white" />
            <Row mark={<Alert />} kind={<OpMark />} label="曲面" tone="text-[#5b1a9c]" last />
            {Array.from({ length: 30 }, (_, i) => (
              <tr key={i} className={rowBase} aria-hidden="true">
                <td className="h-5 p-0" />
              </tr>
            ))}
          </tbody>
        </table>
      </div>
      <div className="flex h-[17px] shrink-0 items-center bg-[#ededed] px-[6px]">
        <SideArrow />
        <span className="ml-2 h-[15px] w-[15px] border border-[#999] bg-gradient-to-b from-[#f5f5f5] to-[#cfcfcf]" />
        <span className="ml-auto rotate-180">
          <SideArrow />
        </span>
      </div>
    </div>
    <div className="flex h-3 shrink-0 items-center gap-1">
      <span className="h-px flex-1 bg-[#aaa]" />
      <span className="h-[5px] w-5 border border-[#999] bg-[#ddd]" />
      <span className="h-px flex-1 bg-[#aaa]" />
    </div>
    {["相依性", "细节"].map((t) => (
      <button
        key={t}
        type="button"
        className="flex h-[23px] shrink-0 items-stretch border-b border-[#999] bg-gradient-to-b from-[#fafafa] to-[#d6dadb] text-left text-xs text-[#14145a]"
      >
        <span className="flex flex-1 items-center border-r border-[#999] pl-[6px]">{t}</span>
        <span className="flex w-[18px] items-center justify-end">
          <svg viewBox="0 0 12 10" className="h-[10px] w-3" aria-hidden="true">
            <path d="M1 1L6 8L11 1" fill="none" stroke="#555" strokeWidth="2.500" />
          </svg>
        </span>
      </button>
    ))}
    <div className="flex h-[10px] shrink-0 items-start gap-2 overflow-hidden px-1 pt-[2px]">
      <SideArrow />
      <span className="flex h-4 flex-1 justify-center gap-0.5 border border-[#999] bg-[#e8e8e8] pt-0.5">
        <span className="h-2 w-px bg-[#555]" />
        <span className="h-2 w-px bg-[#555]" />
        <span className="h-2 w-px bg-[#555]" />
      </span>
      <span className="rotate-180">
        <SideArrow />
      </span>
    </div>
  </section>
);

function SideArrow() {
  return (
    <svg viewBox="0 0 4 8" className="h-2 w-1" aria-hidden="true">
      <path d="M4 0V8L0 4Z" fill="#222" />
    </svg>
  );
}

/* ---------- graphics window ---------- */

const halfPath =
  "M135 361L44 268L85 255L190 361H243L125 240L168 226L300 361H353L207 211L250 198L410 361H463L290 185L333 173L519 361H573L375 160L418 150L1008 741H1062L463 138L507 128L1118 741H1172L551 117L598 107L1228 741H1281L641 98L689 90L1298 700V643L735 82L783 74L1298 590V535L830 68L881 62L1298 480V425L928 57L980 51L1298 370V316L1030 48L1082 43L1298 262V206L1132 42L1186 39L1298 153V97L1238 38H1298";

const Half = ({ tail }: { tail: string }) => (
  <>
    <path d={halfPath} stroke="#2ce4ee" />
    <path d="M135 361L172 398" stroke={tail} />
  </>
);

const Scene = () => (
  <main className="min-w-0 flex-1 bg-gradient-to-b from-[#000040] from-0% to-black to-70%">
    <svg viewBox="239 157 999 667" className="h-full w-full" role="img" aria-label="刀轨">
      <g transform="translate(350 350) scale(.33333)" fill="none" strokeWidth="8" strokeLinejoin="round">
        <Half tail="#f6cdee" />
        <g transform="translate(2596 0) scale(-1 1)">
          <Half tail="#f0b43c" />
        </g>
      </g>

      <g>
        <path d="M296 756H318V779H296Z" fill="#9c9c9c" />
        <path d="M295 779V742" stroke="#2f9a3c" strokeWidth="1.500" />
        <path d="M295 743L297.500 751H292.500Z" fill="#2f9a3c" />
        <path d="M295 779.500H330" stroke="#e0484c" strokeWidth="1.500" />
        <path d="M333 779.500L323 777V782Z" fill="#e0383c" />
        <circle cx="295" cy="779.500" r="3.500" fill="#2a5ae0" stroke="#9ab4f5" />
        <path d="M292 732L295 736L298 732M295 736V740" fill="none" stroke="#2f9a3c" />
        <path d="M335 775L342 784M342 775L335 784" stroke="#d0383c" />
      </g>

      <g>
        <path d="M979 723L1021 746V793L979 817L937.500 793V746Z" fill="#1b4b84" stroke="#d9dcde" strokeWidth="3" />
        <path d="M1020 747V793L979 816L962 806Q957 795 958 785L979 797L1003 784V759L1000 752Q1002 742 997 734Z" fill="#23799f" />
        <path d="M948 740Q974 734 1001 753M997 734Q1004 755 1000 780M1020 790Q1016 770 1003 758M1010 797Q988 804 968 790M962 806Q954 785 958 765M939 776Q945 755 976 745" fill="none" stroke="#b9cad6" strokeWidth=".8" />
        <path d="M979.500 745.500L1001 758V783L979.500 794.500L958.500 783V758Z" fill="#061018" stroke="#d9dcde" strokeWidth="4" />
        <path d="M979.500 748.500L998.500 759L979.500 770L961 759Z" fill="#1b4b84" />
        <path d="M961 759L979.500 770V791L961 781Z" fill="#1b4b84" />
        <path d="M998.500 759V781L979.500 791V770Z" fill="#23799f" />
        <path d="M961 759L979.500 770L998.500 759M979.500 770V791" fill="none" stroke="#b9cad6" strokeWidth=".8" />
        <g fill="#24799f" stroke="#d4dadd" paintOrder="stroke" strokeLinejoin="round">
          <text x="1031" y="776" fontSize="46" strokeWidth="4" className="font-['Noto_Sans','Noto_Sans_CJK_SC',sans-serif] font-bold">
            3D世界网
          </text>
          <text x="1031" y="799" fontSize="19" strokeWidth="2.500" className="font-['DejaVu_Sans',sans-serif] font-bold">
            WWW.3DSJW.COM
          </text>
        </g>
      </g>
    </svg>
  </main>
);

/* ---------- page ---------- */

export default function App() {
  return (
    <div className="flex h-screen flex-col overflow-hidden bg-[#c9c9c9] font-['Noto_Sans','Noto_Sans_CJK_SC',sans-serif] text-xs text-[#111]">
      <Paints />
      <header className="flex h-[27px] shrink-0 items-center gap-1 border-t-[3px] border-b border-t-[#555] border-b-black bg-[#1c1c1c] pl-[3px]">
        <Icon name="logo" className="size-4" />
        <h1 className="whitespace-pre text-xs text-[#6f6f6f]">NX 10 - 加工 - [曲线  无所不能.prt （修改的 ） ]</h1>
      </header>

      <nav aria-label="主菜单" className="flex h-7 shrink-0 items-center gap-[14px] border-b border-[#c2c2c2] bg-gradient-to-b from-[#e6e6e6] to-[#dedede] whitespace-nowrap">
        <span className="-mr-[14px] flex h-7 w-[30px] shrink-0 items-center">
          <span className="ml-[3px] h-5 border-l-2 border-dotted border-[#a6a6a6]" />
          <Icon name="bit" className="ml-0.5 size-[18px]" />
        </span>
        {menus.map(([t, k]) => (
          <button key={t} type="button" className={`shrink-0 ${t === "首选项" ? "ml-2" : ""} ${t === "GC工具箱" ? "-mr-1" : ""}`}>
            {t}
            {k && (
              <>
                (<span className="underline">{k}</span>)
              </>
            )}
          </button>
        ))}
      </nav>

      <div className="flex h-[34px] shrink-0 items-stretch overflow-hidden border-b border-[#b4b4b4] border-t border-t-[#f4f4f4] bg-gradient-to-b from-[#e0e0e0] to-[#d0d0d0]">
        <div className={segment}>
          <Grip />
          <button type="button" className="flex w-[69px] shrink-0 items-center">
            <span className="flex w-[31px] justify-center">
              <Icon name="logo" />
            </span>
            <span className="w-[26px]">启动</span>
            <span className="flex w-3 justify-center">
              <Caret />
            </span>
          </button>
          <Tools items="newFile open save print | cut copy paste del | undo+ redo | openGray+ | snap boxes equal gemList | info" />
          <Overflow className="w-7 pt-[5px]" />
        </div>
        <div className="flex shrink-0">
          <Grip />
          <span className="flex w-[60px] pl-1">
            <Combo label="工作图层" value="1" className="w-[51px]" />
          </span>
          <Tools items="layerList layerMove layerCopy axis axisTurn axisZero axisSave axisPen | gemPlay+ gemPlay gemPick gemA gemB gemC | grid gridSnap" />
        </div>
      </div>

      <div className="flex h-[35px] shrink-0 items-stretch overflow-hidden border-b border-[#a8a8a8] border-t border-t-[#f4f4f4] bg-gradient-to-b from-[#dedede] to-[#cbcbcb]">
        <div className={segment}>
          <Grip />
          <Tools items="holder holderA+ holderB+" />
          <Overflow className="w-[25px] pt-[5px]" />
        </div>
        <div className={segment}>
          <Grip />
          <Tools items="fit+ shade+ blueCube+ clipA clipB+ exit" />
          <Overflow className="w-[26px] pt-[5px]" />
        </div>
        <div className={segment}>
          <Grip />
          <Tools items="*pathTree partTree | partFind partCap tagPlus tagRing tagCyl partGray | newOp listGray starFunnel | delGray rows" />
          <Overflow className="w-[37px] pt-[5px]" />
        </div>
        <div className={segment}>
          <Grip />
          <Tools items="analyse+ plus+ extrude+ cylinder solid lattice+" />
          <Overflow chevrons={false} className="w-[15px] pt-[22px]" />
        </div>
        <div className="flex shrink-0">
          <Grip />
          <Tools items="wrench trimA trimB" />
        </div>
      </div>

      <div className="flex h-[33px] shrink-0 items-stretch overflow-hidden bg-gradient-to-b from-[#c4c4c4] to-[#dedede] pl-[5px]">
        <Combo label="类型过滤器" value="没有选择过滤器" className="mr-2 w-[147px]" />
        <Combo label="选择范围" value="整个装配" className="mr-0.5 w-[155px]" />
        <Tools items="linkGray | resetGray !filterOn+ backTarget findTree | hexPoint dashBox+ | roll blueBox |" />
        <button type="button" aria-label="文本框" className="flex w-[31px] shrink-0 items-center justify-center">
          <span className="flex size-[22px] items-center justify-center border border-[#1c2f6e] bg-white font-['Liberation_Serif',serif] text-2xl leading-5 font-bold">
            A
          </span>
        </button>
        <button
          type="button"
          aria-label="文本"
          className="w-[31px] shrink-0 font-['Liberation_Serif',serif] text-[27px] leading-8 font-bold"
        >
          A
        </button>
        <Tools items="axisXYZ highlight orient" />
      </div>

      <div className="flex min-h-0 flex-1">
        <nav aria-label="资源条" className="flex w-[31px] shrink-0 flex-col gap-[15px] overflow-hidden bg-gradient-to-b from-[#b2b2b2] to-[#a5a5a5]">
          <button type="button" aria-label="设置" className="-mb-[15px] flex h-[46px] shrink-0 items-start justify-center pt-2">
            <Icon name="gear" className="size-[15px]" />
          </button>
          {tabGroups.map((g) => (
            <div key={g[0]} className="flex shrink-0 flex-col items-end gap-[3px]">
              {g.map((t) => (
                <button
                  key={t}
                  type="button"
                  aria-label={t}
                  className={`flex h-[39px] shrink-0 items-center overflow-hidden rounded-l-sm border border-r-0 border-[#666] ${
                    t === "tabOperation" ? "w-7 bg-[#ececec] pl-[4px]" : "w-[27px] bg-gradient-to-r from-[#dcdcdc] to-[#cfcfcf] pl-[2px]"
                  }`}
                >
                  <Icon name={t} className="size-[23px] shrink-0" />
                </button>
              ))}
            </div>
          ))}
        </nav>

        <Navigator />

        <aside aria-label="同步建模" className="w-[46px] shrink-0 bg-[#c9c9c9]">
          <div className="flex flex-col border-b border-[#a8a8a8] bg-gradient-to-r from-[#e4e4e4] to-[#d2d2d2] pb-1">
            <span className="mx-[6px] mt-1 h-1 border-t-2 border-dotted border-[#a6a6a6]" />
            {sideTools.split(" ").map((item) => {
              const name = item.replace(/[*+]/g, "");
              const pressed = item.startsWith("*");
              return (
                <button key={name} type="button" aria-label={name} className="flex h-[31px] shrink-0 items-center justify-center gap-[5px]">
                  <span className={`flex items-center justify-center ${pressed ? "size-[30px] rounded-sm border border-[#666] bg-white" : "size-6"}`}>
                    <Icon name={name} className={pressed ? "size-[21px]" : "size-[23px]"} />
                  </span>
                  {item.endsWith("+") && <Caret />}
                </button>
              );
            })}
            <span className="flex h-[9px] items-center pl-[7px]">
              <SideArrow />
            </span>
          </div>
        </aside>

        <Scene />
      </div>
    </div>
  );
}
